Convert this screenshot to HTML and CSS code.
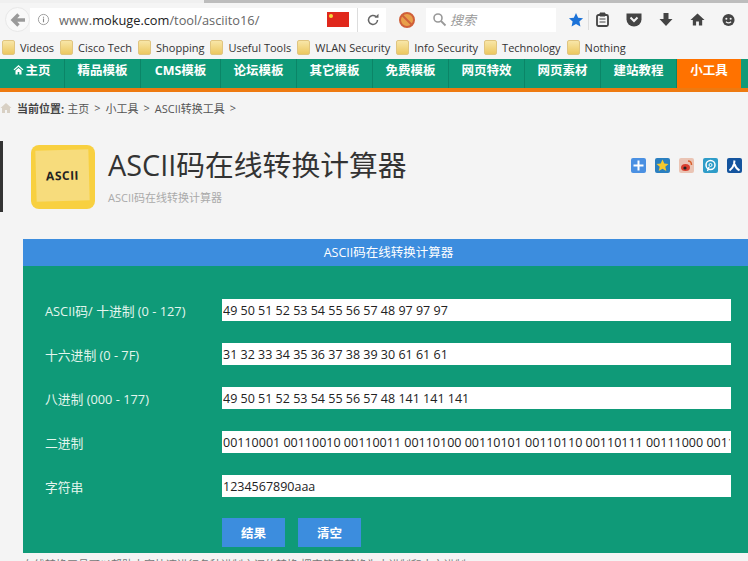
FILE: index.html
```html
<!DOCTYPE html>
<html lang="zh">
<head>
  <meta charset="UTF-8">
  <title>ASCII码在线转换计算器</title>
  <link rel="stylesheet" href="styles.css">
</head>
<body>
  <div class="browser">
    <div class="tabstrip"><div class="tabshape"></div></div>
    <div class="toolbar">
      <div class="back">
        <svg width="16" height="16" viewBox="0 0 16 16"><path d="M8.500 2.500 3 8l5.500 5.500M3 8h12" fill="none" stroke="#9a9a9a" stroke-width="3.400"/></svg>
      </div>
      <div class="urlbar">
        <svg class="info" width="13" height="13" viewBox="0 0 14 14"><circle cx="7" cy="7" r="5.500" fill="none" stroke="#999"/><path d="M7 6v4M7 4v1.200" stroke="#888" stroke-width="1.200"/></svg>
        <span class="url"><span class="url-dim">www.</span>mokuge.com<span class="url-dim">/tool/asciito16/</span></span>
        <svg class="flag" width="22" height="15" viewBox="0 0 22 15"><rect width="22" height="15" fill="#e0281c"/><circle cx="4" cy="4" r="2" fill="#f5d63a"/></svg>
        <span class="reload">
          <svg width="14" height="14" viewBox="0 0 14 14"><path d="M11.500 7A4.500 4.500 0 1 1 10 3.600" fill="none" stroke="#666" stroke-width="1.500"/><path d="M8.500 4.800h4v-4z" fill="#666"/></svg>
        </span>
      </div>
      <svg class="noscript" width="18" height="18" viewBox="0 0 18 18"><circle cx="9" cy="9" r="7" fill="#e8a04a" stroke="#d0603a" stroke-width="2"/><path d="M4.500 4.500 13.500 13.500" stroke="#d0603a" stroke-width="2"/></svg>
      <div class="search">
        <svg width="15" height="15" viewBox="0 0 15 15"><circle cx="6" cy="6" r="4" fill="none" stroke="#999" stroke-width="1.600"/><path d="m9 9 4.500 4.500" stroke="#999" stroke-width="1.800"/></svg>
        <span>搜索</span>
      </div>
      <div class="tool-icons">
        <svg width="16" height="16" viewBox="0 0 17 17"><path d="m8.500 1 2.300 5 5.200.6-3.900 3.500 1.100 5.400-4.700-2.700-4.700 2.700 1.100-5.400L1 6.600 6.200 6z" fill="#1b72d8"/></svg>
        <i class="sep"></i>
        <svg width="13" height="15" viewBox="0 0 13 15"><rect x="1" y="3" width="11" height="11" rx="1.500" fill="none" stroke="#444" stroke-width="1.800"/><path d="M4 1h5v3H4zM3.500 7h6M3.500 10h6" fill="#444" stroke="#444"/></svg>
        <svg width="16" height="14" viewBox="0 0 16 14"><path d="M.5.500h15v6a7.500 7 0 0 1-15 0z" fill="#444"/><path d="m4.500 4.500 3.500 3.500 3.500-3.500" fill="none" stroke="#f4f4f4" stroke-width="2"/></svg>
        <svg width="14" height="15" viewBox="0 0 14 15"><path d="M4.500 1h5v6h4L7 14 .5 7h4z" fill="#444"/></svg>
        <svg width="15" height="15" viewBox="0 0 16 15"><path d="M8 1 .5 8H3v6h3.500V9.500h3V14H13V8h2.500z" fill="#444"/></svg>
        <svg width="13" height="14" viewBox="0 0 15 15"><circle cx="7.500" cy="7.500" r="7" fill="#444"/><circle cx="5" cy="6" r="1.200" fill="#f4f4f4"/><circle cx="10" cy="6" r="1.200" fill="#f4f4f4"/><path d="M4.500 9.500q3 2.500 6 0" fill="none" stroke="#f4f4f4" stroke-width="1.300"/></svg>
      </div>
    </div>
    <div class="bookmarks">
      <span class="bm"><i class="folder"></i>Videos</span>
      <span class="bm"><i class="folder"></i>Cisco Tech</span>
      <span class="bm"><i class="folder"></i>Shopping</span>
      <span class="bm"><i class="folder"></i>Useful Tools</span>
      <span class="bm"><i class="folder"></i>WLAN Security</span>
      <span class="bm"><i class="folder"></i>Info Security</span>
      <span class="bm"><i class="folder"></i>Technology</span>
      <span class="bm"><i class="folder"></i>Nothing</span>
    </div>
  </div>

  <nav class="nav">
    <a class="nav-item nav-home">
      <svg width="11" height="11" viewBox="0 0 11 11"><path d="M5.500 1 .5 5.500l1 .8 4-3.500 4 3.500 1-.8zM2.500 6.500v4h2.200V8h1.600v2.500h2.200v-4l-3-2.600z" fill="#fff"/></svg>主页
    </a>
    <a class="nav-item nav-w76">精品模板</a>
    <a class="nav-item nav-w80">CMS模板</a>
    <a class="nav-item nav-w76">论坛模板</a>
    <a class="nav-item nav-w76">其它模板</a>
    <a class="nav-item nav-w76">免费模板</a>
    <a class="nav-item nav-w76">网页特效</a>
    <a class="nav-item nav-w76">网页素材</a>
    <a class="nav-item nav-w76">建站教程</a>
    <a class="nav-item nav-active">小工具</a>
  </nav>

  <div class="crumbs">
    <svg width="12" height="12" viewBox="0 0 12 12"><path d="M6 1 .5 6H2v5h3V8h2v3h3V6h1.500z" fill="#d8d0c4"/></svg>
    <b>当前位置:</b>
    <span>主页</span><span class="gt">&gt;</span>
    <span>小工具</span><span class="gt">&gt;</span>
    <span>ASCII转换工具</span><span class="gt">&gt;</span>
  </div>

  <header class="head">
    <div class="logo"><div class="note">ASCII</div></div>
    <div class="titles">
      <h1>ASCII码在线转换计算器</h1>
      <p>ASCII码在线转换计算器</p>
    </div>
    <div class="share">
      <svg width="15" height="15" viewBox="0 0 15 15"><rect width="15" height="15" rx="2" fill="#4a90e2"/><path d="M7.500 2.500v10M2.500 7.500h10" stroke="#fff" stroke-width="2"/></svg>
      <svg width="15" height="15" viewBox="0 0 15 15"><rect width="15" height="15" rx="2" fill="#2a7fc0"/><path d="m7.500 1.500 1.800 4 4.200.4-3.200 2.800 1 4.300-3.800-2.300-3.800 2.300 1-4.300L1.500 5.900l4.200-.4z" fill="#f5c92e"/></svg>
      <svg width="15" height="15" viewBox="0 0 15 15"><rect width="15" height="15" rx="2" fill="#eac4b4"/><ellipse cx="6.500" cy="9.500" rx="4.500" ry="3.500" fill="#d8402e"/><circle cx="6" cy="10" r="1.600" fill="#222"/><path d="M9 3q3.500 0 3.500 4" fill="none" stroke="#d8602e" stroke-width="1.500"/></svg>
      <svg width="15" height="15" viewBox="0 0 15 15"><rect width="15" height="15" rx="2" fill="#2e9cc8"/><circle cx="7.500" cy="7" r="4.500" fill="none" stroke="#fff" stroke-width="1.500"/><circle cx="7.500" cy="7" r="1.500" fill="none" stroke="#fff"/><path d="M4.500 13 6 9" stroke="#fff" stroke-width="1.300"/></svg>
      <svg width="15" height="15" viewBox="0 0 15 15"><rect width="15" height="15" rx="2" fill="#14549e"/><path d="M7.500 2.500 7 6Q6 10 2.500 12.500M7.500 6q1 4 5 6.500" fill="none" stroke="#fff" stroke-width="2"/></svg>
    </div>
  </header>

  <section class="panel">
    <div class="panel-title">ASCII码在线转换计算器</div>
    <form class="panel-body">
      <div class="row">
        <label>ASCII码/ 十进制 (0 - 127)</label>
        <input type="text" value="49 50 51 52 53 54 55 56 57 48 97 97 97">
      </div>
      <div class="row">
        <label>十六进制 (0 - 7F)</label>
        <input type="text" value="31 32 33 34 35 36 37 38 39 30 61 61 61">
      </div>
      <div class="row">
        <label>八进制 (000 - 177)</label>
        <input type="text" value="49 50 51 52 53 54 55 56 57 48 141 141 141">
      </div>
      <div class="row">
        <label>二进制</label>
        <input type="text" value="00110001 00110010 00110011 00110100 00110101 00110110 00110111 00111000 00111001">
      </div>
      <div class="row">
        <label>字符串</label>
        <input type="text" value="1234567890aaa">
      </div>
      <div class="buttons">
        <button type="button">结果</button>
        <button type="button">清空</button>
      </div>
    </form>
  </section>
  <p class="foot">在线转换工具可以帮助大家快速进行各种进制之间的转换,把字符串转换为十进制和十六进制。</p>
</body>
</html>
```

FILE: styles.css
```css
* {
  box-sizing: border-box;
}
html, body {
  height: 561px;
  overflow: hidden;
}
body {
  margin: 0;
  background: #f4f4f4;
  color: #333;
  font-family: "Open Sans", "Noto Sans CJK SC", sans-serif;
  font-size: 13px;
}
svg {
  display: block;
  flex: none;
}

/* browser chrome */
.browser {
  height: 59px;
  background: #f5f5f5;
}
.tabstrip {
  height: 3px;
  background: #bdbdbd;
}
.tabshape {
  width: 204px;
  height: 3px;
  background: #f0f0f0;
}
.toolbar {
  height: 33px;
  display: flex;
  align-items: center;
  padding-left: 5px;
}
.back {
  width: 25px;
  height: 25px;
  border: 1px solid #e8e8e8;
  border-radius: 50%;
  background: #f9f9f9;
  display: flex;
  align-items: center;
  justify-content: center;
}
.urlbar {
  width: 356px;
  height: 24px;
  padding: 0 0 0 7px;
  background: #fff;
  display: flex;
  align-items: center;
}
.info {
  margin-right: 9px;
}
.url {
  font-size: 12.800px;
  color: #222;
  flex: 1;
}
.url-dim {
  color: #666;
}
.flag {
  margin-right: 8px;
}
.reload {
  border-left: 1px solid #ddd;
  height: 24px;
  width: 29px;
  padding: 5px 0 0 8px;
}
.noscript {
  margin-left: 12px;
}
.search {
  width: 130px;
  height: 24px;
  margin-left: 10px;
  padding-left: 6px;
  background: #fff;
  display: flex;
  align-items: center;
  gap: 3px;
  color: #999;
  font-style: italic;
  font-size: 13px;
}
.tool-icons {
  display: flex;
  align-items: center;
  gap: 17px;
  margin-left: 12px;
}
.sep {
  width: 1px;
  height: 20px;
  background: #ddd;
  margin: 0 -10px 0 -13px;
}
.bookmarks {
  height: 23px;
  display: flex;
  align-items: center;
  padding-left: 2px;
  font-size: 11px;
  color: #333;
}
.bm {
  display: flex;
  align-items: center;
  gap: 5px;
  margin-right: 6px;
}
.folder {
  width: 13px;
  height: 15px;
  border-radius: 2px;
  background: linear-gradient(#f8e6a8, #ecc860);
  border: 1px solid #e0c580;
}

/* site nav */
.nav {
  height: 33px;
  background: #0f9a78;
  border-bottom: 4px solid #ee7a10;
  display: flex;
  color: #fff;
  font-size: 12.500px;
  font-weight: 700;
}
.nav-item {
  height: 29px;
  padding-bottom: 8px;
  display: flex;
  align-items: center;
  justify-content: center;
  gap: 1px;
  border-right: 1px solid #0b8567;
}
.nav-home {
  width: 65px;
}
.nav-w76 {
  width: 76px;
}
.nav-w80 {
  width: 80px;
}
.nav-active {
  width: 64px;
  background: #ff7200;
  border-right: 0;
}

.crumbs {
  height: 33px;
  padding-bottom: 2px;
  display: flex;
  align-items: center;
  gap: 4px;
  font-size: 11px;
  color: #555;
}
.crumbs b {
  margin-left: 1px;
  margin-right: -1px;
  color: #444;
}
.crumbs .gt {
  margin: 0 1px;
}

/* title block */
.head {
  height: 71px;
  margin-top: 16px;
  border-left: 3px solid #333;
  display: flex;
  padding: 4px 0 0 28px;
}
.logo {
  width: 64px;
  height: 64px;
  border-radius: 8px;
  background: #f8d040;
  padding: 5px 6px 8px 5px;
}
.note {
  height: 100%;
  background: #f7dc7c;
  transform: rotate(-1.500deg);
  display: flex;
  align-items: center;
  justify-content: center;
  font-size: 12px;
  font-weight: 700;
  letter-spacing: 0.500px;
  color: #222;
}
.titles {
  margin-left: 13px;
  width: 523px;
}
.titles h1 {
  margin: 0;
  font-size: 28.800px;
  font-weight: 400;
  line-height: 40px;
  color: #333;
}
.titles p {
  margin: 4px 0 0;
  font-size: 11px;
  color: #aaa;
}
.share {
  display: flex;
  gap: 9px;
  padding-top: 13px;
}

/* converter panel */
.panel {
  margin: 27px 0 0 23px;
  background: #0f9a78;
}
.panel-title {
  height: 27px;
  background: #3c8dde;
  color: #fff;
  font-size: 12.500px;
  line-height: 27px;
  text-align: center;
  padding-left: 6px;
}
.panel-body {
  height: 287px;
  padding: 22px 17px 0 22px;
}
.row {
  height: 44px;
  display: flex;
  align-items: center;
}
.row label {
  width: 177px;
  color: #e4f6ee;
  font-size: 12.800px;
}
.row input {
  flex: 1;
  min-width: 0;
  height: 22px;
  border: 0;
  padding: 1px 1px 0;
  background: #fff;
  color: #222;
  font-family: inherit;
  font-size: 12.500px;
}
.buttons {
  display: flex;
  gap: 13px;
  margin: 10px 0 0 177px;
}
.buttons button {
  width: 63px;
  height: 29px;
  border: 0;
  background: #3c8dde;
  color: #fff;
  font-family: inherit;
  font-size: 12.500px;
  font-weight: 700;
}
.foot {
  margin: 3px 0 0 23px;
  font-size: 11px;
  color: #777;
  white-space: nowrap;
}
```
